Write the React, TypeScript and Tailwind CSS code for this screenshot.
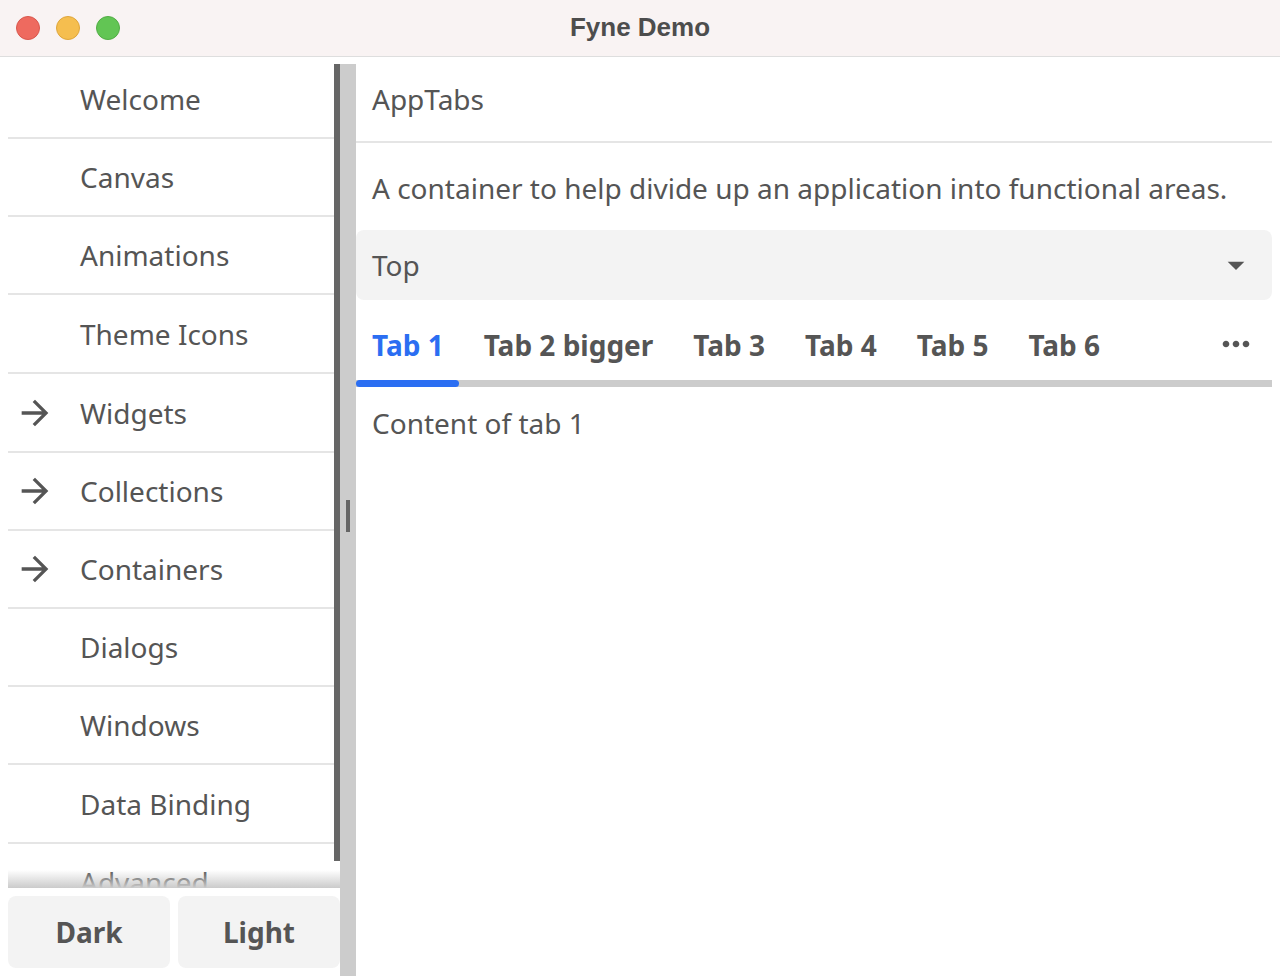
import React from 'react';

const TEXT = 'text-[#555555]';

const menuItems: { label: string; arrow?: boolean; tall?: boolean }[] = [
  { label: 'Welcome' },
  { label: 'Canvas' },
  { label: 'Animations' },
  { label: 'Theme Icons', tall: true },
  { label: 'Widgets', arrow: true, tall: true },
  { label: 'Collections', arrow: true },
  { label: 'Containers', arrow: true },
  { label: 'Dialogs' },
  { label: 'Windows' },
  { label: 'Data Binding', tall: true },
  { label: 'Advanced' },
];

const tabs = ['Tab 1', 'Tab 2 bigger', 'Tab 3', 'Tab 4', 'Tab 5', 'Tab 6'];

function ArrowForward() {
  return (
    <svg width="40" height="40" viewBox="0 0 24 24" className="fill-[#555555] shrink-0">
      <path d="M12 4l-1.41 1.41L16.17 11H4v2h12.17l-5.58 5.59L12 20l8-8z" />
    </svg>
  );
}

function DropDown() {
  return (
    <svg width="40" height="40" viewBox="0 0 24 24" className="fill-[#555555] shrink-0">
      <path d="M7 10l5 5 5-5z" />
    </svg>
  );
}

function MoreHoriz() {
  return (
    <svg width="40" height="40" viewBox="0 0 24 24" className="fill-[#555555] shrink-0">
      <path d="M6 10c-1.1 0-2 .9-2 2s.9 2 2 2 2-.9 2-2-.9-2-2-2zm12 0c-1.1 0-2 .9-2 2s.9 2 2 2 2-.9 2-2-.9-2-2-2zm-6 0c-1.1 0-2 .9-2 2s.9 2 2 2 2-.9 2-2-.9-2-2-2z" />
    </svg>
  );
}

export default function App() {
  return (
    <div className="w-[1280px] h-[976px] bg-white flex flex-col overflow-hidden font-['Noto_Sans',sans-serif]">
      {/* Title bar */}
      <div className="relative h-[57px] shrink-0 bg-[#f9f3f3] border-b border-[#dedede] flex items-center">
        <div className="flex items-center gap-[16px] pl-[16px]">
          <span className="w-[24px] h-[24px] rounded-full bg-[#ee6a5f] border border-[#d9574d]" />
          <span className="w-[24px] h-[24px] rounded-full bg-[#f5be4f] border border-[#dfa63b]" />
          <span className="w-[24px] h-[24px] rounded-full bg-[#62c554] border border-[#52ad45]" />
        </div>
        <div className="absolute inset-0 flex items-center justify-center pointer-events-none">
          <span className="font-['Liberation_Sans',sans-serif] font-bold text-[26px] text-[#4d4d4d] -mt-[2px]">
            Fyne Demo
          </span>
        </div>
      </div>

      <div className="flex-1 flex min-h-0">
        {/* Sidebar */}
        <div className="w-[340px] shrink-0 flex flex-col pl-2">
          <div className="relative flex-1 overflow-hidden">
            <div className="pt-1">
              {menuItems.map((item, i) => (
                <div key={item.label}>
                  <div className={`${item.tall ? 'h-[77px]' : 'h-[76px]'} flex items-center`}>
                    <div className="w-[40px] ml-[7px] flex items-center">
                      {item.arrow && <ArrowForward />}
                    </div>
                    <span className={`ml-[25px] text-[28px] ${TEXT}`}>{item.label}</span>
                  </div>
                  {i < menuItems.length - 1 && <div className="h-[2px] bg-[#e5e5e5]" />}
                </div>
              ))}
            </div>
            {/* scroll shadow */}
            <div className="absolute bottom-0 left-0 right-0 h-[18px] bg-linear-to-b from-white/0 to-[#cbcbcb]" />
            {/* scrollbar */}
            <div className="absolute right-0 top-[7px] w-[6px] h-[797px] bg-[#666666]" />
          </div>
          <div className="h-[88px] shrink-0 flex gap-2 py-2">
            <button className={`flex-1 rounded-lg bg-[#f3f3f3] font-bold text-[28px] ${TEXT}`}>Dark</button>
            <button className={`flex-1 rounded-lg bg-[#f3f3f3] font-bold text-[28px] ${TEXT}`}>Light</button>
          </div>
        </div>

        {/* Split divider */}
        <div className="relative w-[16px] shrink-0 mt-[7px] bg-[#cccccc]">
          <div className="absolute left-[6px] top-[436px] w-[4px] h-[32px] bg-[#666666]" />
        </div>

        {/* Main content */}
        <div className="flex-1 flex flex-col pr-2 min-w-0">
          <div className="h-[84px] flex items-center px-4">
            <span className={`text-[28px] ${TEXT}`}>AppTabs</span>
          </div>
          <div className="h-[2px] bg-[#e5e5e5]" />
          <div className="h-[87px] flex items-center px-4 pt-[2px]">
            <span className={`text-[28px] ${TEXT}`}>
              A container to help divide up an application into functional areas.
            </span>
          </div>
          <div className="h-[70px] rounded-lg bg-[#f3f3f3] flex items-center justify-between pl-4 pr-4">
            <span className={`text-[28px] ${TEXT}`}>Top</span>
            <DropDown />
          </div>
          <div className="h-[80px] pt-[9px] flex items-center justify-between">
            <div className="flex items-center gap-2">
              {tabs.map((t, i) => (
                <button
                  key={t}
                  className={`px-4 font-bold text-[28px] ${i === 0 ? 'text-[#2b6ef2]' : TEXT}`}
                >
                  {t}
                </button>
              ))}
            </div>
            <div className="pr-4 -mt-[1px]">
              <MoreHoriz />
            </div>
          </div>
          <div className="relative h-[7px] bg-[#cccccc]">
            <div className="absolute left-0 top-0 h-[7px] w-[103px] rounded-full bg-[#2b6ef2]" />
          </div>
          <div className="px-4 pt-[17px]">
            <span className={`text-[28px] leading-[38px] ${TEXT}`}>Content of tab 1</span>
          </div>
        </div>
      </div>
    </div>
  );
}
